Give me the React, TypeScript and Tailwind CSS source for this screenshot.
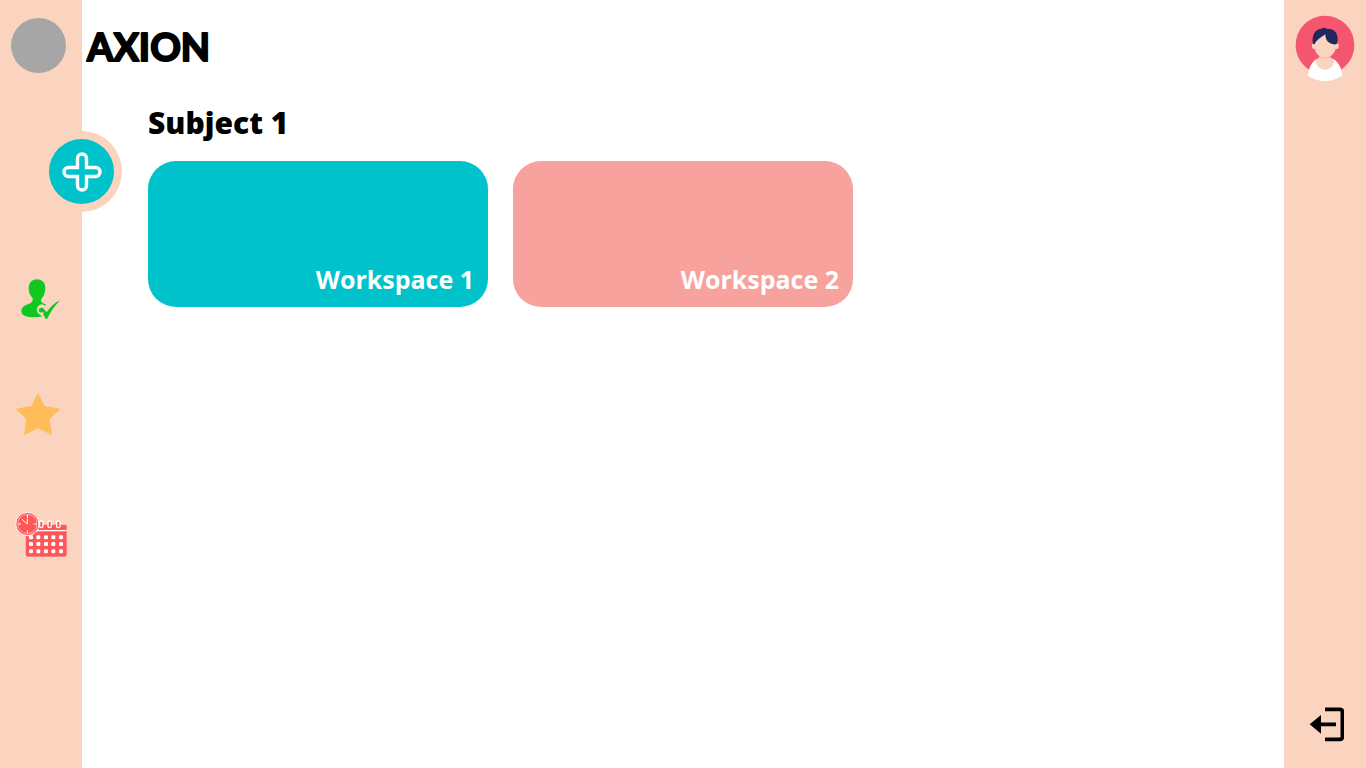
import React from "react";

function Logo() {
  return (
    <svg viewBox="0 0 140 56" className="h-14 w-[140px]" role="img" aria-label="AXION">
      <text
        x="1"
        y="41"
        className="fill-black stroke-black stroke-2 font-['Lato',sans-serif] text-[38px] font-bold [stroke-linejoin:round]"
      >
        AXION
      </text>
    </svg>
  );
}

function PlusIcon() {
  return (
    <svg viewBox="0 0 40 40" className="size-10" fill="none" stroke="#fff" strokeWidth="3.4" aria-hidden="true">
      <path d="M15.5 15.5V6.5a4.5 4.5 0 0 1 9 0v9h9a4.5 4.5 0 0 1 0 9h-9v9a4.5 4.5 0 0 1-9 0v-9h-9a4.5 4.5 0 0 1 0-9z" />
    </svg>
  );
}

function PersonIcon() {
  return (
    <svg viewBox="3 0 168 168" className="size-14" aria-hidden="true">
      <path
        fill="#10c820"
        d="M81 28C65 28 56 39 56 54C56 69 61 76 66 82C70 88 69 95 62 99C49 105 34 108 34 124C34 137 49 142 72 142C83 142 91 141 96 139L84 130C76 118 83 104 96 103L107 107C109 104 107 103 104 102C94 99 91 94 94 87C101 79 106 70 106 54C106 39 97 28 81 28Z"
      />
      <path
        fill="#10c820"
        d="M86 120C88 113 97 111 101 116L110 127C121 110 135 98 150 91C136 106 122 124 112 146H107L99 133C104 130 101 125 95 127C91 129 87 126 86 120Z"
      />
    </svg>
  );
}

function StarIcon() {
  return (
    <svg viewBox="9 3 168 168" className="size-14" aria-hidden="true">
      <path fill="#ffbd59" d="M90 23L110 63L157 71L125 103L132 151L90 130L48 151L55 103L23 71L70 63Z" />
    </svg>
  );
}

function CalendarIcon() {
  const columns = [69, 91, 114, 136, 159];
  const rows = [97, 117, 139];
  return (
    <svg viewBox="9 -9 168 168" className="size-14" aria-hidden="true">
      <path
        d="M56 58H171Q177 58 177 64V149Q177 156 170 156H59Q52 156 52 149V62Z"
        fill="#ff5757"
        stroke="#fff"
        strokeOpacity=".75"
        strokeWidth="2"
      />
      <path d="M60 77H176" stroke="#fff" strokeWidth="4" />
      {[100, 125, 151].map((x) => (
        <rect key={x} x={x - 5} y="48" width="10" height="20" rx="4" fill="#ff5757" stroke="#fff" strokeWidth="4" />
      ))}
      {rows.map((y) =>
        columns.map((x) => <rect key={`${x}-${y}`} x={x - 6} y={y - 6} width="12" height="12" rx="4" fill="#fff" />),
      )}
      <circle cx="58" cy="57" r="35" fill="#ff5757" stroke="#fff" strokeWidth="3" />
      <circle cx="58" cy="57" r="29" fill="none" stroke="#fff" strokeWidth="2" strokeOpacity=".7" />
      <path d="M58 29V38M58 76V85M30 57H39M77 57H86M58 41V57L42 43" fill="none" stroke="#fff" strokeWidth="3" />
    </svg>
  );
}

function AvatarIcon() {
  return (
    <svg viewBox="45 30 180 198" className="h-[66px] w-[60px]" aria-hidden="true">
      <path fill="#f5566f" d="M135 32A88 88 0 0 0 47 120C47 151 62 176 85 193H185C208 176 223 151 223 120A88 88 0 0 0 135 32Z" />
      <path fill="#fff" d="M84 212C87 182 100 164 117 160H153C170 164 184 182 186 212Q163 228 135 228T84 212Z" />
      <path fill="#fbd4c0" d="M117 154V160L107 165C108 182 119 194 135 194S162 182 163 165L152 160V154Z" />
      <ellipse cx="102" cy="123" rx="6" ry="9" fill="#fbd4c0" />
      <ellipse cx="170" cy="123" rx="6" ry="9" fill="#fbd4c0" />
      <path fill="#fbd4c0" d="M101 112C104 95 116 84 135 84S168 95 170 112C171 139 153 160 135 160S100 139 101 112Z" />
      <path d="M112 150Q134 170 158 150" fill="none" stroke="#f5566f" strokeOpacity=".45" strokeWidth="2" />
      <path
        fill="#21265d"
        d="M99 116C94 91 105 72 124 71Q129 66 138 69L137 72C160 69 174 83 173 104Q173 114 169 118C147 120 136 106 136 88C126 96 109 104 104 118Z"
      />
    </svg>
  );
}

function LogoutIcon() {
  return (
    <svg viewBox="18 33 114 108" className="h-9 w-[38px]" aria-hidden="true">
      <path d="M75 43H120Q127 43 127 50V125Q127 133 120 133H75M108 88H58" fill="none" stroke="#000" strokeWidth="11" />
      <path d="M29 88L63 60V116Z" />
    </svg>
  );
}

const workspaces = [
  { name: "Workspace 1", color: "bg-[#00c2cb]" },
  { name: "Workspace 2", color: "bg-[#f7a29c]" },
];

export default function App() {
  return (
    <div className="flex min-h-screen bg-white font-['Open_Sans','Noto_Sans',sans-serif] text-black">
      <aside className="flex w-[82px] shrink-0 flex-col items-start bg-[#fbd4c0] pt-[18px]">
        <button type="button" aria-label="Home" className="ml-[11px] size-[55px] rounded-full bg-[#a6a6a6]" />
        <button
          type="button"
          aria-label="Add workspace"
          className="mt-[58px] ml-[41px] grid size-[81px] shrink-0 place-items-center rounded-full bg-[#fbd4c0]"
        >
          <span className="grid size-[65px] place-items-center rounded-full bg-[#00c2cb]">
            <PlusIcon />
          </span>
        </button>
        <nav aria-label="Main" className="mt-[58px] ml-[11px] flex flex-col gap-[60px]">
          <button type="button" aria-label="Attendance">
            <PersonIcon />
          </button>
          <button type="button" aria-label="Favourites">
            <StarIcon />
          </button>
          <button type="button" aria-label="Schedule">
            <CalendarIcon />
          </button>
        </nav>
      </aside>

      <main className="min-w-0 flex-1">
        <header className="pt-5 pl-1">
          <h1>
            <Logo />
          </h1>
        </header>
        <section className="mt-[27px] px-[66px]">
          <h2 className="text-[30px] leading-10 font-extrabold">Subject 1</h2>
          <div className="mt-[18px] flex flex-wrap gap-[25px]">
            {workspaces.map(({ name, color }) => (
              <a
                key={name}
                href="#"
                className={`flex h-[146px] w-[340px] items-end justify-end rounded-[28px] px-3.5 pb-2.5 text-[25px] leading-9 font-bold text-white ${color}`}
              >
                {name}
              </a>
            ))}
          </div>
        </section>
      </main>

      <aside className="flex w-[82px] shrink-0 flex-col items-center justify-between bg-[#fbd4c0] pt-[15px] pb-[26px]">
        <button type="button" aria-label="Profile">
          <AvatarIcon />
        </button>
        <button type="button" aria-label="Log out">
          <LogoutIcon />
        </button>
      </aside>
    </div>
  );
}
